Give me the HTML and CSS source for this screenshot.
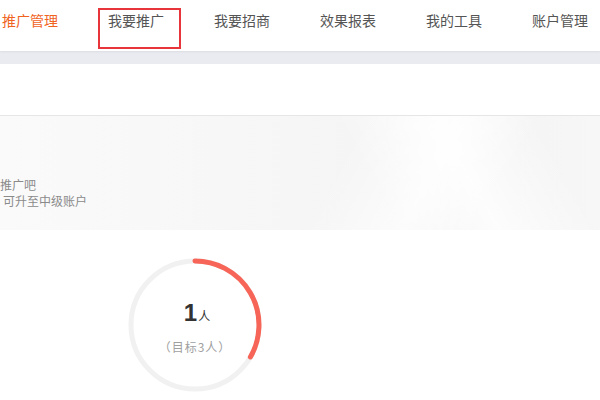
FILE: index.html
```html
<!DOCTYPE html>
<html lang="zh">
<head>
<meta charset="utf-8">
<link rel="stylesheet" href="styles.css">
</head>
<body>
<header class="nav">
  <a class="nav-item active">推广管理</a>
  <a class="nav-item marked">我要推广</a>
  <a class="nav-item">我要招商</a>
  <a class="nav-item">效果报表</a>
  <a class="nav-item">我的工具</a>
  <a class="nav-item">账户管理</a>
</header>
<div class="band"></div>
<div class="blank"></div>
<section class="banner">
  <div class="banner-text">
    <p class="l1">推广吧</p>
    <p class="l2">可升至中级账户</p>
  </div>
</section>
<section class="stats">
  <div class="ring">
    <svg class="ring-svg" width="140" height="140" viewBox="0 0 140 140">
      <circle cx="70" cy="70" r="64" fill="none" stroke="#f1f1f1" stroke-width="5"/>
      <path d="M70 6 A64 64 0 0 1 125.4 102" fill="none" stroke="#f66557" stroke-width="5" stroke-linecap="round"/>
    </svg>
    <div class="ring-label">
      <div class="count"><span class="num">1</span><span class="unit">人</span></div>
      <div class="goal">（目标3人）</div>
    </div>
  </div>
</section>
</body>
</html>
```
FILE: styles.css
```css
*, *::before, *::after { box-sizing: border-box; }
html, body { margin: 0; padding: 0; }
body {
  width: 600px;
  height: 400px;
  overflow: hidden;
  background: #fff;
  font-family: "Microsoft YaHei", "Noto Sans CJK SC", "Liberation Sans", sans-serif;
}
.nav {
  height: 51px;
  display: flex;
  align-items: flex-start;
  padding-left: 2px;
  background: #fff;
  position: relative;
  box-shadow: 0 1px 2px rgba(0,0,0,0.06);
}
.nav-item {
  display: block;
  flex: 0 0 106px;
  font-size: 14px;
  line-height: 20px;
  margin-top: 10px;
  color: #555;
  position: relative;
}
.nav-item:last-child { flex: 0 0 auto; }
.nav-item.active { color: #f0631e; }
.nav-item.marked::after {
  content: "";
  position: absolute;
  left: -10px;
  top: -2px;
  width: 83px;
  height: 41px;
  border: 2px solid #e8353b;
}
.band {
  height: 13px;
  background: #e9ebf1;
}
.blank {
  height: 51px;
  background: #fff;
}
.banner {
  height: 115px;
  border-top: 1px solid #e6e6e6;
  background:
    linear-gradient(118deg, rgba(255,255,255,0) 0%, rgba(255,255,255,0) 55%, rgba(255,255,255,0.7) 70%, rgba(255,255,255,0) 82%),
    linear-gradient(60deg, rgba(255,255,255,0) 60%, rgba(255,255,255,0.8) 75%, rgba(255,255,255,0) 90%),
    linear-gradient(90deg, #fafafa 0%, #f6f6f6 50%, #f3f3f3 80%, #f7f7f7 100%);
  display: flex;
  align-items: flex-end;
  padding-bottom: 21px;
}
.banner-text p {
  margin: 0;
  font-size: 12px;
  line-height: 16px;
  color: #8a8a8a;
}
.banner-text .l2 { padding-left: 3px; }
.stats {
  padding-left: 125px;
  padding-top: 25px;
}
.ring {
  position: relative;
  width: 140px;
  height: 140px;
}
.ring-svg { display: block; }
.ring-label {
  position: absolute;
  inset: 0;
  display: flex;
  flex-direction: column;
  align-items: center;
  justify-content: center;
  padding-top: 2px;
}
.count {
  display: flex;
  align-items: baseline;
  color: #333;
  line-height: 30px;
  margin-left: 4px;
}
.num {
  font-size: 24px;
  font-weight: bold;
  font-family: "Liberation Sans", "Noto Sans CJK SC", sans-serif;
}
.unit { font-size: 12px; margin-left: 1px; }
.goal {
  margin-top: 8px;
  font-size: 12px;
  color: #a0a0a0;
  line-height: 16px;
  letter-spacing: 1px;
}
```
